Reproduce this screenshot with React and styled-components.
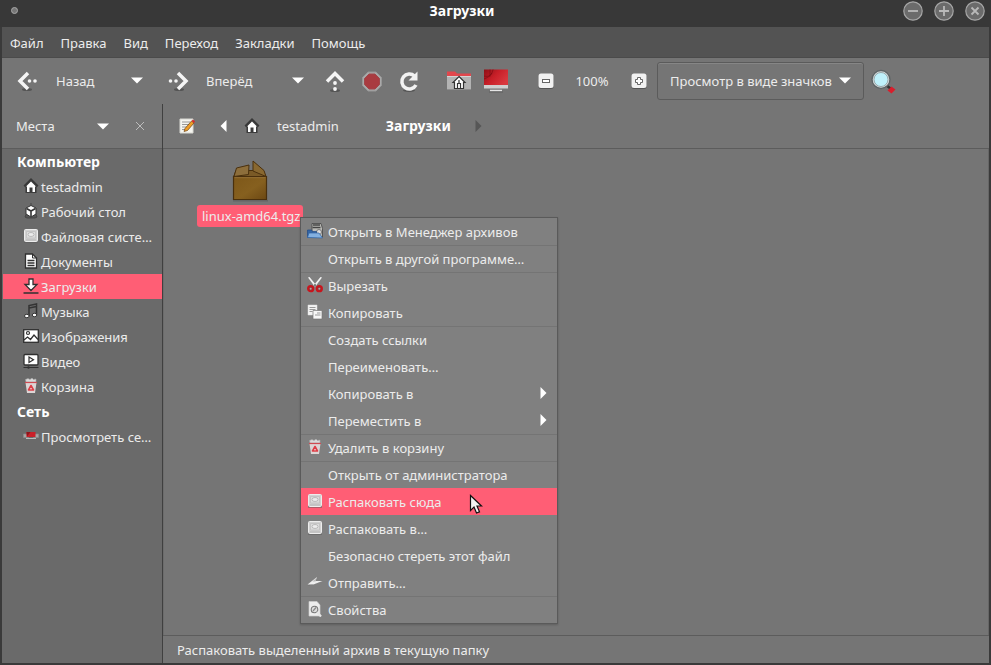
import React, { useState } from 'react';
import styled, { createGlobalStyle } from 'styled-components';

const GlobalStyle = createGlobalStyle`
    * {
        box-sizing: border-box;
    }

    body {
        margin: 0;
        background: #3a3a3a;
        color: #ececec;
        font: 13px/18px 'Noto Sans', 'Open Sans', sans-serif;
    }

    button, select {
        margin: 0;
        padding: 0;
        border: 0;
        background: none;
        color: inherit;
        font: inherit;
    }

    svg {
        display: block;
        flex: none;
    }
`;

const Window = styled.div`
    display: flex;
    flex-direction: column;
    min-height: 100vh;
    padding-bottom: 2px;
    background: #3a3a3a;
`;

const TitleBar = styled.header`
    display: flex;
    align-items: center;
    height: 27px;
    padding: 0 6px 5px 9px;
    background: #383838;
`;

const WindowTitle = styled.h1`
    flex: 1;
    margin: 0;
    color: #fff;
    font-size: 14px;
    line-height: 18px;
    text-align: center;
`;

const WindowButtons = styled.div`
    display: flex;
    gap: 11px;
`;

const Frame = styled.div`
    display: flex;
    flex: 1;
    flex-direction: column;
    margin: 0 2px;
    background: #757575;
`;

const MenuBar = styled.nav`
    display: flex;
    align-items: center;
    height: 31px;
    padding: 2px 0 0 8px;
    gap: 17px;
    background: #535353;
    border-bottom: 1px solid #4b4b4b;
`;

const ToolBar = styled.div`
    display: flex;
    align-items: center;
    height: 46px;
    padding: 0 0 1px 8px;
`;

const ToolButton = styled.button`
    display: flex;
    align-items: center;
    justify-content: center;
    width: 37px;
    height: 37px;
`;

const LabelButton = styled.button`
    display: flex;
    align-items: center;
    gap: 16px;
    width: ${(props) => props.$width}px;
    height: 37px;
    padding-left: 6px;
`;

const Spacer = styled.span`
    width: ${(props) => props.$size}px;
`;

const ZoomLabel = styled.span`
    width: 56px;
    text-align: center;
`;

const ComboBox = styled.label`
    display: grid;
    align-items: center;
    height: 38px;
    border: 1px solid #5b5b5b;
    border-radius: 3px;
    box-shadow: inset 0 1px #868686;

    > * {
        grid-area: 1 / 1;
    }

    svg {
        justify-self: end;
        margin-right: 12px;
        pointer-events: none;
    }
`;

const ComboSelect = styled.select`
    height: 36px;
    padding: 0 31px 0 12px;
    appearance: none;
    outline: none;
`;

const Panes = styled.div`
    display: grid;
    flex: 1;
    grid-template-columns: 161px 1fr;
`;

const Sidebar = styled.aside`
    display: flex;
    flex-direction: column;
    border-right: 1px solid #404040;
    background: #6a6a6a;
`;

const PaneHeader = styled.div`
    display: flex;
    align-items: center;
    height: 45px;
    padding-right: 4px;
    background: #757575;
    border-bottom: 1px solid #5c5c5c;
`;

const SideTitle = styled.span`
    flex: 1;
    padding-left: 14px;
`;

const SideHeading = styled.h2`
    margin: 0;
    padding-left: 15px;
    color: #fff;
    font-size: 14px;
    line-height: 25px;
`;

const PlaceList = styled.ul`
    margin: 0 0 0 1px;
    padding: 0;
    list-style: none;
`;

const Place = styled.a`
    display: flex;
    align-items: center;
    gap: 2px;
    height: 25px;
    padding: 0 0 0 20px;
    background: ${(props) => (props.$active ? '#ff5e75' : 'none')};
    color: inherit;
    text-decoration: none;
    white-space: nowrap;

    svg {
        margin-bottom: 2px;
    }

    span {
        padding-top: 1px;
    }
`;

const Main = styled.main`
    display: flex;
    flex-direction: column;
    min-width: 0;
`;

const Location = styled(PaneHeader)`
    padding-left: 5px;
`;

const Crumb = styled.button`
    display: flex;
    align-items: center;
    gap: 17px;
    padding: 0 24px 0 2px;
    color: ${(props) => (props.$current ? '#fff' : 'inherit')};
    font-size: ${(props) => (props.$current ? 14 : 13)}px;
    font-weight: ${(props) => (props.$current ? 700 : 400)};
`;

const Folder = styled.section`
    position: relative;
    flex: 1;
    padding: 11px 33px;
    border-right: 1px solid #666;
    border-left: 1px solid #6c6c6c;
`;

const FileTile = styled.div`
    display: inline-flex;
    flex-direction: column;
    align-items: center;
    gap: 3px;
`;

const FileName = styled.span`
    padding: 2px 3px 2px 5px;
    border-radius: 3px;
    background: #ff5e75;
`;

const ContextMenu = styled.div`
    position: absolute;
    top: 68px;
    left: 136px;
    width: 258px;
    border: 1px solid #5a5a5a;
    background: #808080;
    box-shadow: 0 1px 2px rgba(0, 0, 0, 0.2);
`;

const MenuItem = styled.button`
    position: relative;
    display: grid;
    grid-template-columns: 16px 1fr auto;
    align-items: center;
    gap: 5px;
    width: 100%;
    height: 27px;
    padding: 0 10px 0 6px;
    background: ${(props) => (props.$active ? '#ff5e75' : 'none')};
    box-shadow: ${(props) => (props.$divided ? 'inset 0 1px #747474' : 'none')};
    text-align: left;

    > svg {
        margin-bottom: 1px;
    }

    > span {
        grid-column: 2;
    }
`;

const Pointer = styled.svg`
    position: absolute;
    top: 6px;
    left: 168px;
`;

const StatusBar = styled.footer`
    height: 28px;
    padding: 5px 14px;
    border-top: 1px solid #5c5c5c;
`;

const Icon = ({ size = 16, children }) => (
    <svg width={size} height={size} viewBox={`0 0 ${size} ${size}`} aria-hidden='true'>
        {children}
    </svg>
);

const Caret = () => (
    <svg width='12' height='7' viewBox='0 0 12 7' aria-hidden='true'>
        <path d='M0 0.5h12L6 6.5z' fill='#fff' />
    </svg>
);

const SideArrow = ({ left, color = '#fff' }) => (
    <svg width='7' height='12' viewBox='0 0 7 12' aria-hidden='true'>
        <path d={left ? 'M6.5 0v12L0.5 6z' : 'M0.5 0v12L6.5 6z'} fill={color} />
    </svg>
);

const WindowIcon = ({ children }) => (
    <Icon size={20}>
        <circle cx='10' cy='10' r='9.2' fill='#6b6b6b' stroke='#a6a6a6' strokeWidth='1.2' />
        <g stroke='#b9b9b9' strokeWidth='1.8'>
            {children}
        </g>
    </Icon>
);

const BackIcon = () => (
    <Icon size={24}>
        <ellipse cx='11' cy='20.5' rx='5' ry='1.5' fill='#555' />
        <path d='M12 4l-8 8 8 8' fill='none' stroke='#f5f5f5' strokeWidth='3.5' />
        <circle cx='13.5' cy='12' r='1.8' fill='#f5f5f5' />
        <circle cx='19' cy='12' r='1.8' fill='#f5f5f5' />
    </Icon>
);

const ForwardIcon = () => (
    <Icon size={24}>
        <ellipse cx='13' cy='20.5' rx='5' ry='1.5' fill='#555' />
        <path d='M12 4l8 8-8 8' fill='none' stroke='#f5f5f5' strokeWidth='3.5' />
        <circle cx='4.5' cy='12' r='1.8' fill='#f5f5f5' />
        <circle cx='10' cy='12' r='1.8' fill='#f5f5f5' />
    </Icon>
);

const UpIcon = () => (
    <Icon size={24}>
        <ellipse cx='12' cy='21.5' rx='5' ry='1.5' fill='#555' />
        <path d='M4 12.5l8-8 8 8' fill='none' stroke='#f5f5f5' strokeWidth='3.5' />
        <circle cx='12' cy='14' r='1.9' fill='#f5f5f5' />
        <circle cx='12' cy='20' r='1.9' fill='#f5f5f5' />
    </Icon>
);

const StopIcon = () => (
    <Icon size={24}>
        <path d='M8 3h8l5.500 5.500v8L16 22H8l-5.500-5.500v-8z' fill='#a9a9a9' stroke='#979797' />
        <path d='M9 5h6l4.500 4.500v6L15 20H9l-4.500-4.500v-6z' fill='#a93b40' stroke='#a0474b' />
    </Icon>
);

const ReloadIcon = () => (
    <Icon size={24}>
        <ellipse cx='12' cy='21.5' rx='6' ry='1.5' fill='#555' />
        <path d='M19 16a7.500 7.500 0 1 1-1.500-9' fill='none' stroke='#f2f2f2' strokeWidth='3.5' />
        <path d='M20.500 2.500v9h-9z' fill='#f2f2f2' />
    </Icon>
);

const HomeFolderIcon = () => (
    <Icon size={24}>
        <path d='M0 2.500h8l2 2h14V9H0z' fill='#e2474d' />
        <path d='M0 7h24v14H0z' fill='#b3b3b3' />
        <path d='M0 7h24v1H0z' fill='#d4d4d4' />
        <path d='M0 20h24v1H0z' fill='#8e8e8e' />
        <path d='M12 7.500L18 13.500H16.500V19.500H7.500V13.500H6z' fill='#fff' stroke='#333' strokeWidth='1.2' />
        <path d='M10.500 19.500v-5h3v5M12 11v3' fill='none' stroke='#333' strokeWidth='1.2' />
    </Icon>
);

const ComputerIcon = () => (
    <Icon size={24}>
        <defs>
            <linearGradient id='screen' x1='0' y1='0' x2='1' y2='0.600'>
                <stop offset='0' stopColor='#8d0f16' />
                <stop offset='0.500' stopColor='#c81f28' />
                <stop offset='1' stopColor='#d9383e' />
            </linearGradient>
        </defs>
        <path d='M0 0.500h24v16H0z' fill='url(#screen)' />
        <path d='M0 10c5-2 8-4 9-9.500M0 7c4 1 6 0 8-3M6 0.500v7' fill='none' stroke='#7d0c12' strokeWidth='0.7' />
        <path d='M0 16h24v3.500H0z' fill='#cfcfcf' />
        <path d='M6 21.500h12' stroke='#e5e5e5' strokeWidth='1.5' />
        <path d='M5 23h14' stroke='#606060' />
    </Icon>
);

const ZoomIcon = ({ plus }) => (
    <Icon size={16}>
        <rect x='0.500' y='1' width='15' height='15' rx='2.500' fill='#555' />
        <rect x='0.500' y='0.500' width='15' height='14.500' rx='2.500' fill='#f1f1f1' />
        {plus ? (
            <path
                d='M6.500 4.500h3v2h2v3h-2v2h-3v-2h-2v-3h2z'
                fill='#fff'
                stroke='#666'
            />
        ) : (
            <rect x='4.500' y='6.500' width='7' height='3' fill='#fff' stroke='#666' />
        )}
    </Icon>
);

const SearchIcon = () => (
    <Icon size={26}>
        <path d='M16 17l5 4' stroke='#333' strokeWidth='2.5' />
        <path d='M21.500 18.500l4 3-4 4-4-3z' fill='#d81e2c' />
        <circle cx='11' cy='11.500' r='9' fill='#d5dcdd' stroke='#5d6365' strokeWidth='1.4' />
        <circle cx='11' cy='11.500' r='7' fill='#bff1fb' stroke='#8b9799' strokeWidth='0.8' />
    </Icon>
);

const HomeIcon = () => (
    <Icon>
        <path d='M8 1l7 7-1.500 1.500V15h-11V9.500L1 8z' fill='#3b3b3b' />
        <path d='M8 3.500l5 5h-1V14H9.500V9.500h-3V14H4V8.500H3z' fill='#fff' />
        <path d='M1 8l7-7 7 7' fill='none' stroke='#383838' strokeWidth='1.3' />
    </Icon>
);

const EditIcon = () => (
    <Icon>
        <path d='M1 1h13v14H1z' fill='#f5f5f0' stroke='#d8d8d2' />
        <path d='M3 4h8M3 6.500h7M3 9h5M3 11.500h3' stroke='#999' />
        <path d='M6 10.500L12.500 3l2.500 2-6.500 7.500-3.500 1z' fill='#ef9d27' stroke='#694016' strokeWidth='0.7' />
        <path d='M12.500 3l1.500-1.500L16 3.500 15 5z' fill='#d52b2b' />
    </Icon>
);

const CloseIcon = () => (
    <Icon size={10}>
        <path d='M1 1l8 8M9 1L1 9' stroke='#bdbdbd' />
    </Icon>
);

const DesktopIcon = () => (
    <Icon>
        <path d='M2 14l2-5h8l2 5-2 1H4zM8 0v4' fill='#555' stroke='#444' />
        <path d='M8 2.500l5 2.500v6l-5 3-5-3V5z' fill='#fff' stroke='#333' />
        <path d='M3.500 5.500L8 8l4.500-2.500M8 8v5.500' fill='none' stroke='#333' strokeWidth='1.6' />
    </Icon>
);

const DriveIcon = () => (
    <Icon>
        <path d='M1.500 2h13l0.500 12.500H1z' fill='#5a5a5a' />
        <rect x='1.500' y='1.500' width='13' height='12' rx='1' fill='#d2d2d2' stroke='#ededed' />
        <path d='M3.500 3.500h9v6.500h-9z' fill='#dcdcdc' stroke='#bdbdbd' strokeWidth='0.7' />
        <ellipse cx='8' cy='6.500' rx='3' ry='2' fill='#ececec' stroke='#b0b0b0' strokeWidth='0.8' />
        <path d='M3 12h10' stroke='#b5b5b5' />
    </Icon>
);

const DocumentIcon = () => (
    <Icon>
        <path d='M2.500 1h7l4 4v10h-11z' fill='#fff' stroke='#303030' strokeWidth='1.3' />
        <path d='M9.500 1v4h4' fill='none' stroke='#303030' />
        <path d='M4.500 7.500h7M4.500 10h7M4.500 12.500h7' stroke='#303030' strokeWidth='1.3' />
    </Icon>
);

const DownloadIcon = () => (
    <Icon>
        <path d='M6 1h4v5.500h4L8 12.500 2 6.500h4z' fill='#fff' stroke='#303030' strokeWidth='1.3' />
        <path d='M0.500 15h15' stroke='#303030' strokeWidth='1.5' />
    </Icon>
);

const MusicIcon = () => (
    <Icon>
        <path d='M6 13V2.500L13.500 1v10.500M6 5l7.500-1.500' fill='none' stroke='#333' strokeWidth='1.5' />
        <ellipse cx='3.800' cy='13' rx='2.300' ry='1.700' fill='#fff' stroke='#333' />
        <ellipse cx='11.500' cy='12' rx='2.300' ry='1.700' fill='#fff' stroke='#333' />
    </Icon>
);

const ImageIcon = () => (
    <Icon>
        <rect x='0.700' y='1.700' width='14.600' height='12.600' fill='#fff' stroke='#303030' strokeWidth='1.3' />
        <circle cx='5' cy='5' r='1.500' fill='none' stroke='#303030' strokeWidth='1.2' />
        <path d='M1 12l3.500-3 3 2.500L11 7l4 4.500' fill='none' stroke='#303030' strokeWidth='1.3' />
    </Icon>
);

const VideoIcon = () => (
    <Icon>
        <rect x='1' y='1.500' width='14' height='10.500' rx='1' fill='#fff' stroke='#303030' strokeWidth='1.3' />
        <path d='M6 4l4.500 2.700L6 9.500z' fill='#fff' stroke='#303030' strokeWidth='1.2' />
        <path d='M0.500 14.500h15' stroke='#303030' />
        <circle cx='5.500' cy='14.500' r='1.200' fill='#303030' />
    </Icon>
);

const TrashIcon = () => (
    <Icon>
        <path d='M3 4l-0.500-2.500L5 0.500l2 1 2-1.500 1.500 1.500L13 1v3z' fill='#dadada' stroke='#a5a5a5' strokeWidth='0.6' />
        <path d='M2.500 4.500h11l-1.500 10.500H4z' fill='#dcd5d5' />
        <path d='M2 4.500h12' stroke='#cf4a51' strokeWidth='1.2' />
        <path d='M8 7.500l2.500 4.500h-5z' fill='#f3dcdc' stroke='#dd3f47' strokeWidth='1.6' strokeLinejoin='round' />
    </Icon>
);

const NetworkIcon = () => (
    <Icon>
        <path d='M0.500 6h5v3.500h-5zM10.500 6h5v3.500h-5z' fill='#a5a5a5' stroke='#8b8b8b' strokeWidth='0.7' />
        <path d='M3.500 4h9v5h-9z' fill='#c92029' />
        <path d='M3.500 4h4L4 8.500z' fill='#8e151b' />
        <path d='M3 10.500h10' stroke='#bbb' />
    </Icon>
);

const ArchiverIcon = () => (
    <Icon>
        <path d='M5 0.500h9l1.500 5V14H5z' fill='#b9b9b5' stroke='#444' strokeWidth='0.8' />
        <path d='M6 2h7M5.500 4.500h8' stroke='#444' strokeWidth='1.4' />
        <circle cx='12' cy='9' r='2.500' fill='#ddd' stroke='#777' />
        <path d='M0.500 7h4l1 1.500h4v6h-9z' fill='#3465a4' stroke='#204a87' strokeWidth='0.7' />
        <path d='M0.500 14.500l1.500-4.500h10l3.500 5z' fill='#83b0e0' stroke='#3465a4' strokeWidth='0.7' />
    </Icon>
);

const CutIcon = () => (
    <Icon>
        <path d='M1 0.500l1.500-0.500L9.500 8.500l-1.500 1.500zM15 0.500L13.500 0 6.500 8.500 8 10z' fill='#f2f2f2' />
        <circle cx='8' cy='8' r='0.800' fill='#777' />
        <circle cx='3.700' cy='11.700' r='2.700' fill='#8a3a3d' stroke='#c9141c' strokeWidth='1.9' />
        <circle cx='12.300' cy='11.700' r='2.700' fill='#8a3a3d' stroke='#c9141c' strokeWidth='1.9' />
        <circle cx='3.700' cy='11.700' r='1' fill='#b9a0a0' />
        <circle cx='12.300' cy='11.700' r='1' fill='#b9a0a0' />
    </Icon>
);

const CopyIcon = () => (
    <Icon>
        <path d='M1 1h9v10H1z' fill='#f3f3f3' stroke='#ddd' strokeWidth='0.5' />
        <path d='M2.500 3.500h6M2.500 5.500h6M2.500 7.500h3' stroke='#999' />
        <path d='M6 6.500h9v8.500H6z' fill='#f7f7f7' stroke='#777' strokeWidth='0.7' />
        <path d='M10 9h3.500M8 11h5.500' stroke='#999' />
    </Icon>
);

const SendIcon = () => (
    <Icon>
        <path d='M16 6.500L0.500 11.500 6 10.500z' fill='#555' />
        <path d='M10 3L0.500 10.500h6L15.500 7H8z' fill='#eee' />
        <path d='M10 3L5.500 7.500h3z' fill='#bdbdbd' />
    </Icon>
);

const PropertiesIcon = () => (
    <Icon>
        <path d='M2 0.500h8l3 3.500v11H2z' fill='#ededed' stroke='#ccc' strokeWidth='0.7' />
        <circle cx='7.500' cy='8.500' r='3.300' fill='#ddd' stroke='#777' strokeWidth='1.1' />
        <path d='M10 11l4 4.500' stroke='#e6e6e6' strokeWidth='2.2' />
        <path d='M6 10l3-3.500' stroke='#888' strokeWidth='1.2' />
    </Icon>
);

const PackageIcon = () => (
    <svg width='36' height='42' viewBox='0 0 36 42' aria-hidden='true'>
        <defs>
            <linearGradient id='box' x1='0' y1='0' x2='1' y2='1'>
                <stop offset='0' stopColor='#7d5719' />
                <stop offset='0.550' stopColor='#86601f' />
                <stop offset='1' stopColor='#6c4813' />
            </linearGradient>
        </defs>
        <path d='M1 40h35v1.500H1z' fill='#646464' />
        <path d='M4 10.500h26l4.500 6.500H1.500z' fill='#7a5a26' stroke='#4a300d' />
        <path d='M1.500 16.500h33v23h-33z' fill='url(#box)' stroke='#4a300d' strokeWidth='1.2' />
        <path d='M21 1l11 9.500 2 6-13-5.500z' fill='#896830' stroke='#4a300d' />
        <path d='M4.500 8l12.500-3-0.500 9.500L2 16.500z' fill='#8d6e3b' stroke='#4a300d' />
        <path d='M2.500 17.700h31' stroke='#96713a' strokeWidth='0.8' />
    </svg>
);

const places = [
    { name: 'testadmin', icon: HomeIcon },
    { name: 'Рабочий стол', icon: DesktopIcon },
    { name: 'Файловая систе…', icon: DriveIcon },
    { name: 'Документы', icon: DocumentIcon },
    { name: 'Загрузки', icon: DownloadIcon },
    { name: 'Музыка', icon: MusicIcon },
    { name: 'Изображения', icon: ImageIcon },
    { name: 'Видео', icon: VideoIcon },
    { name: 'Корзина', icon: TrashIcon },
];

const network = [{ name: 'Просмотреть се…', icon: NetworkIcon }];

const actions = [
    { name: 'Открыть в Менеджер архивов', icon: ArchiverIcon },
    { name: 'Открыть в другой программе…', divided: true },
    { name: 'Вырезать', icon: CutIcon, divided: true },
    { name: 'Копировать', icon: CopyIcon },
    { name: 'Создать ссылки', divided: true },
    { name: 'Переименовать…' },
    { name: 'Копировать в', submenu: true },
    { name: 'Переместить в', submenu: true },
    { name: 'Удалить в корзину', icon: TrashIcon, divided: true },
    { name: 'Открыть от администратора', divided: true },
    { name: 'Распаковать сюда', icon: DriveIcon },
    { name: 'Распаковать в…', icon: DriveIcon },
    { name: 'Безопасно стереть этот файл' },
    { name: 'Отправить…', icon: SendIcon },
    { name: 'Свойства', icon: PropertiesIcon, divided: true },
];

const Places = ({ items, current, onSelect }) => (
    <PlaceList>
        {items.map(({ name, icon: PlaceIcon }) => (
            <li key={name}>
                <Place href='#' $active={name === current} onClick={() => onSelect(name)}>
                    <PlaceIcon />
                    <span>{name}</span>
                </Place>
            </li>
        ))}
    </PlaceList>
);

const App = () => {
    const [place, setPlace] = useState('Загрузки');
    const [action, setAction] = useState('Распаковать сюда');

    return (
        <Window>
            <GlobalStyle />
            <TitleBar>
                <button aria-label='Меню окна'>
                    <Icon size={12}>
                        <circle cx='5.500' cy='5.500' r='3' fill='#777' stroke='#a8a8a8' />
                    </Icon>
                </button>
                <WindowTitle>Загрузки</WindowTitle>
                <WindowButtons>
                    <button aria-label='Свернуть'>
                        <WindowIcon>
                            <path d='M5 10h10' />
                        </WindowIcon>
                    </button>
                    <button aria-label='Развернуть'>
                        <WindowIcon>
                            <path d='M5 10h10M10 5v10' />
                        </WindowIcon>
                    </button>
                    <button aria-label='Закрыть'>
                        <WindowIcon>
                            <path d='M6.500 6.500l7 7M13.500 6.500l-7 7' />
                        </WindowIcon>
                    </button>
                </WindowButtons>
            </TitleBar>
            <Frame>
                <MenuBar>
                    {['Файл', 'Правка', 'Вид', 'Переход', 'Закладки', 'Помощь'].map((name) => (
                        <button key={name}>{name}</button>
                    ))}
                </MenuBar>
                <ToolBar>
                    <LabelButton $width={108}>
                        <BackIcon />
                        Назад
                    </LabelButton>
                    <ToolButton aria-label='История назад'>
                        <Caret />
                    </ToolButton>
                    <Spacer $size={5} />
                    <LabelButton $width={119}>
                        <ForwardIcon />
                        Вперёд
                    </LabelButton>
                    <ToolButton aria-label='История вперёд'>
                        <Caret />
                    </ToolButton>
                    <ToolButton aria-label='Вверх'>
                        <UpIcon />
                    </ToolButton>
                    <ToolButton aria-label='Остановить'>
                        <StopIcon />
                    </ToolButton>
                    <ToolButton aria-label='Обновить'>
                        <ReloadIcon />
                    </ToolButton>
                    <Spacer $size={13} />
                    <ToolButton aria-label='Домашняя папка'>
                        <HomeFolderIcon />
                    </ToolButton>
                    <ToolButton aria-label='Компьютер'>
                        <ComputerIcon />
                    </ToolButton>
                    <Spacer $size={13} />
                    <ToolButton aria-label='Уменьшить'>
                        <ZoomIcon />
                    </ToolButton>
                    <ZoomLabel>100%</ZoomLabel>
                    <ToolButton aria-label='Увеличить'>
                        <ZoomIcon plus />
                    </ToolButton>
                    <ComboBox>
                        <ComboSelect aria-label='Вид'>
                            <option>Просмотр в виде значков</option>
                        </ComboSelect>
                        <Caret />
                    </ComboBox>
                    <ToolButton aria-label='Поиск'>
                        <SearchIcon />
                    </ToolButton>
                </ToolBar>
                <Panes>
                    <Sidebar>
                        <PaneHeader>
                            <SideTitle>Места</SideTitle>
                            <ToolButton aria-label='Выбрать панель'>
                                <Caret />
                            </ToolButton>
                            <ToolButton aria-label='Закрыть панель'>
                                <CloseIcon />
                            </ToolButton>
                        </PaneHeader>
                        <SideHeading>Компьютер</SideHeading>
                        <Places items={places} current={place} onSelect={setPlace} />
                        <SideHeading>Сеть</SideHeading>
                        <Places items={network} current={place} onSelect={setPlace} />
                    </Sidebar>
                    <Main>
                        <Location>
                            <ToolButton aria-label='Изменить путь'>
                                <EditIcon />
                            </ToolButton>
                            <ToolButton aria-label='Предыдущая папка'>
                                <SideArrow left />
                            </ToolButton>
                            <Crumb>
                                <HomeIcon />
                                testadmin
                            </Crumb>
                            <Spacer $size={21} />
                            <Crumb $current>
                                Загрузки
                            </Crumb>
                            <SideArrow color='#565656' />
                        </Location>
                        <Folder>
                            <FileTile>
                                <PackageIcon />
                                <FileName>linux-amd64.tgz</FileName>
                            </FileTile>
                            <ContextMenu role='menu'>
                                {actions.map(({ name, icon: ActionIcon, divided, submenu }) => (
                                    <MenuItem
                                        key={name}
                                        role='menuitem'
                                        $active={name === action}
                                        $divided={divided}
                                        onMouseEnter={() => setAction(name)}
                                    >
                                        {ActionIcon && <ActionIcon />}
                                        <span>{name}</span>
                                        {submenu && <SideArrow />}
                                        {name === action && (
                                            <Pointer width='14' height='21' viewBox='0 0 14 21' aria-hidden='true'>
                                                <path
                                                    d='M1.500 1.500v15l3.500-3.500 2.500 6 3-1.200-2.500-5.800h4.500z'
                                                    fill='#f3f3f3'
                                                    stroke='#111'
                                                    strokeWidth='1.2'
                                                />
                                            </Pointer>
                                        )}
                                    </MenuItem>
                                ))}
                            </ContextMenu>
                        </Folder>
                        <StatusBar>Распаковать выделенный архив в текущую папку</StatusBar>
                    </Main>
                </Panes>
            </Frame>
        </Window>
    );
};

export default App;
